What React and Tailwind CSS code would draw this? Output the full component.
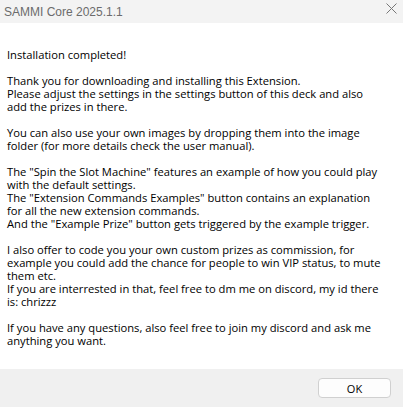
const lines = [
  'Installation completed!',
  '',
  'Thank you for downloading and installing this Extension.',
  'Please adjust the settings in the settings button of this deck and also',
  'add the prizes in there.',
  '',
  'You can also use your own images by dropping them into the image',
  'folder (for more details check the user manual).',
  '',
  'The "Spin the Slot Machine" features an example of how you could play',
  'with the default settings.',
  'The "Extension Commands Examples" button contains an explanation',
  'for all the new extension commands.',
  'And the "Example Prize" button gets triggered by the example trigger.',
  '',
  'I also offer to code you your own custom prizes as commission, for',
  'example you could add the chance for people to win VIP status, to mute',
  'them etc.',
  'If you are interrested in that, feel free to dm me on discord, my id there',
  'is: chrizzz',
  '',
  'If you have any questions, also feel free to join my discord and ask me',
  'anything you want.',
];

export default function App() {
  return (
    <div className="w-[403px] h-[407px] flex flex-col bg-white font-['Liberation_Sans',sans-serif]">
      {/* title bar */}
      <div className="h-[23px] bg-[#f3f3f3] flex items-center justify-between pl-[4px] pr-[6px]">
        <span className="text-[12px] text-[#6b6b6b] leading-none">SAMMI Core 2025.1.1</span>
        <svg width="11" height="11" viewBox="0 0 11 11" className="-mt-[7px]">
          <path d="M0.5 0.5 L10.5 10.5 M10.5 0.5 L0.5 10.5" stroke="#777" strokeWidth="1" />
        </svg>
      </div>

      <div className="flex-1 pt-[25px] px-[7px] text-[11.2px] leading-[13px] text-black font-['Open_Sans',sans-serif]">
        {lines.map((l, i) => (
          <div key={i} className="h-[13px] whitespace-nowrap">{l}</div>
        ))}
      </div>

      <div className="h-[38px] bg-[#f0f0f0] flex items-center justify-end pr-[12px]">
        <button className="w-[73px] h-[20px] bg-[#fdfdfd] border border-[#d0d0d0] rounded-[4px] text-[11px] text-black leading-none font-['Open_Sans',sans-serif]">
          OK
        </button>
      </div>
    </div>
  );
}
